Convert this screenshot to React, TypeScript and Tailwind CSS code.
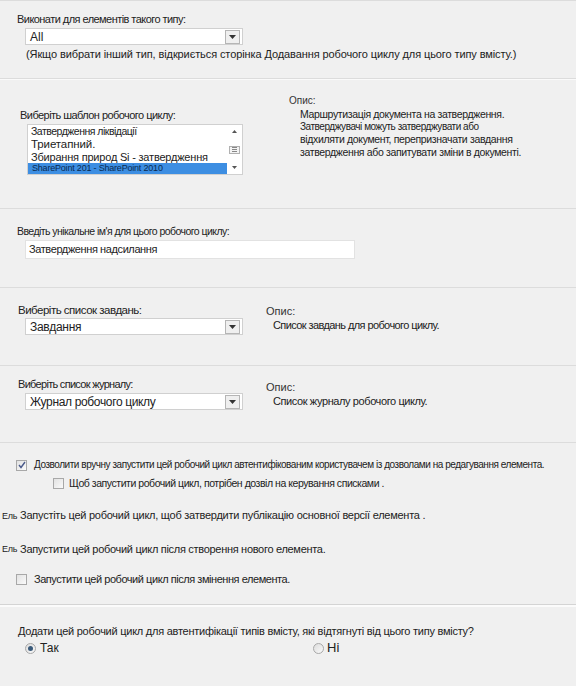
import React from "react";

const Arrow = () => (
  <div className="flex h-[14px] w-[15px] items-center justify-center border border-[#b5b5b5] bg-[#efefef]">
    <svg width="7" height="4" viewBox="0 0 7 4">
      <path d="M0 0 L7 0 L3.5 4 Z" fill="#333" />
    </svg>
  </div>
);

const Select = ({ value, cls }: { value: string; cls: string }) => (
  <div className="ml-[25px] flex h-[17px] w-[218px] items-center justify-between border border-[#d0d0d0] bg-white pl-[4px] pr-[2px]">
    <span className={cls}>{value}</span>
    <Arrow />
  </div>
);

const Checkbox = ({ checked }: { checked?: boolean }) => (
  <div className="flex h-[11px] w-[11px] shrink-0 items-center justify-center border border-[#a8a8a8] bg-gradient-to-br from-[#e2e2e2] to-[#fafafa]">
    {checked && (
      <svg width="8" height="8" viewBox="0 0 8 8">
        <path d="M1 4 L3 6.5 L7 1" stroke="#4a5a8a" strokeWidth="1.4" fill="none" />
      </svg>
    )}
  </div>
);

const Radio = ({ checked }: { checked?: boolean }) => (
  <div className="flex h-[11px] w-[11px] items-center justify-center rounded-full border border-[#a8a8a8] bg-gradient-to-br from-[#dcdcdc] to-[#fafafa]">
    {checked && <div className="h-[5px] w-[5px] rounded-full bg-[#3a5a7a]" />}
  </div>
);

export default function App() {
  return (
    <div
      className="flex h-[686px] w-[576px] flex-col overflow-hidden bg-[#f0f0f0] text-[#222]"
      style={{ fontFamily: '"Liberation Sans", Arial, sans-serif' }}
    >
      {/* Section 1 */}
      <section className="h-[78px] border-t border-[#dcdcdc] pt-[12px]">
        <div className="pl-[17px] text-[11px] leading-[13px] tracking-[-0.55px]">Виконати для елементів такого типу:</div>
        <div className="mt-[2px]">
          <Select value="All" cls="text-[12px] leading-[14px]" />
        </div>
        <div className="mt-[2px] pl-[26px] text-[11px] leading-[14px] tracking-[-0.1px]">
          (Якщо вибрати інший тип, відкриється сторінка Додавання робочого циклу для цього типу вмісту.)
        </div>
      </section>

      {/* Section 2 */}
      <section className="flex h-[130px] border-t border-[#dcdcdc] shadow-[inset_0_1px_0_#fafafa]">
        <div className="w-[270px] pt-[30px]">
          <div className="pl-[20px] text-[11px] leading-[13px] tracking-[-0.55px]">Виберіть шаблон робочого циклу:</div>
          <div className="ml-[27px] mt-[2px] flex h-[51px] w-[216px] overflow-hidden border border-[#d0d0d0] bg-white">
            <div className="flex min-w-0 flex-1 flex-col overflow-hidden whitespace-nowrap">
              <div className="h-[13px] pl-[3px] text-[10.5px] leading-[13px] tracking-[-0.5px]">Затвердження ліквідації</div>
              <div className="h-[13px] pl-[3px] text-[11.5px] leading-[13px] tracking-[-0.1px]">Триетапний.</div>
              <div className="h-[12px] pl-[3px] text-[11px] leading-[12px] tracking-[-0.2px]">Збирання природ Si - затвердження</div>
              <div className="h-[11px] bg-[#3d8ee2] pl-[4px] text-[9px] leading-[11px] tracking-[-0.2px] text-[#0a2a50]">SharePoint 201 - SharePoint 2010</div>
            </div>
            <div className="flex w-[15px] shrink-0 flex-col items-center justify-between py-[5px]">
              <svg width="5" height="3" viewBox="0 0 5 3"><path d="M0 3 L5 3 L2.5 0 Z" fill="#555" /></svg>
              <div className="flex h-[8px] w-[11px] flex-col items-center justify-center gap-[1px] border border-[#b0b0b0] bg-[#f4f4f4]">
                <div className="h-px w-[5px] bg-[#888]" />
                <div className="h-px w-[5px] bg-[#888]" />
                <div className="h-px w-[5px] bg-[#888]" />
              </div>
              <svg width="5" height="3" viewBox="0 0 5 3"><path d="M0 0 L5 0 L2.5 3 Z" fill="#555" /></svg>
            </div>
          </div>
        </div>
        <div className="flex-1 pt-[16px]">
          <div className="pl-[19px] text-[10px] leading-[12px] text-[#333]">Опис:</div>
          <div className="pl-[30px] pt-[1px] text-[10.5px] leading-[12.5px] tracking-[-0.35px]">
            <div>Маршрутизація документа на затвердження.</div>
            <div className="text-[10px] tracking-[-0.45px]">Затверджувачі можуть затверджувати або</div>
            <div>відхиляти документ, перепризначати завдання</div>
            <div>затвердження або запитувати зміни в документі.</div>
          </div>
        </div>
      </section>

      {/* Section 3 */}
      <section className="h-[79px] border-t border-[#dcdcdc] pt-[16px]">
        <div className="pl-[17px] text-[10.5px] leading-[13px] tracking-[-0.55px]">Введіть унікальне ім'я для цього робочого циклу:</div>
        <div className="ml-[25px] mt-[2px] flex h-[19px] w-[330px] items-center border border-[#e2e2e2] bg-white pl-[3px] text-[11px] tracking-[-0.4px]">
          Затвердження надсилання
        </div>
      </section>

      {/* Section 4 */}
      <section className="flex h-[78px] border-t border-[#dcdcdc] pt-[15px]">
        <div className="w-[248px]">
          <div className="pl-[18px] text-[11.5px] leading-[14px] tracking-[-0.5px]">Виберіть список завдань:</div>
          <div className="mt-[1px]">
            <Select value="Завдання" cls="text-[12px] leading-[14px] tracking-[-0.3px]" />
          </div>
        </div>
        <div className="pt-[2px]">
          <div className="pl-[18px] text-[11px] leading-[13px] text-[#333]">Опис:</div>
          <div className="pl-[25px] text-[11px] leading-[14px] tracking-[-0.6px]">Список завдань для робочого циклу.</div>
        </div>
      </section>

      {/* Section 5 */}
      <section className="flex h-[77px] border-t border-[#dcdcdc] pt-[12px]">
        <div className="w-[248px]">
          <div className="pl-[18px] text-[11px] leading-[13px] tracking-[-0.7px]">Виберіть список журналу:</div>
          <div className="mt-[2px]">
            <Select value="Журнал робочого циклу" cls="text-[12px] leading-[14px] tracking-[-0.35px]" />
          </div>
        </div>
        <div className="pt-[3px]">
          <div className="pl-[18px] text-[11px] leading-[13px] text-[#333]">Опис:</div>
          <div className="pl-[25px] text-[11px] leading-[14px] tracking-[-0.4px]">Список журналу робочого циклу.</div>
        </div>
      </section>

      {/* Section 6 */}
      <section className="h-[162px] border-t border-[#dcdcdc] pt-[16px]">
        <div className="flex items-center pl-[16px]">
          <Checkbox checked />
          <span className="ml-[7px] whitespace-nowrap text-[10px] leading-[12px] tracking-[-0.45px]">
            Дозволити вручну запустити цей робочий цикл автентифікованим користувачем із дозволами на редагування елемента.
          </span>
        </div>
        <div className="mt-[6px] flex items-center pl-[53px]">
          <Checkbox />
          <span className="ml-[5px] text-[10.5px] leading-[13px] tracking-[-0.45px]">
            Щоб запустити робочий цикл, потрібен дозвіл на керування списками .
          </span>
        </div>
        <div className="mt-[19px] flex items-center pl-[2px]">
          <span className="text-[9px] leading-[10px] tracking-[-0.3px]">Ель</span>
          <span className="ml-[3px] text-[11px] leading-[13px] tracking-[-0.25px]">
            Запустіть цей робочий цикл, щоб затвердити публікацію основної версії елемента .
          </span>
        </div>
        <div className="mt-[20px] flex items-center pl-[2px]">
          <span className="text-[9px] leading-[10px] tracking-[-0.3px]">Ель</span>
          <span className="ml-[3px] text-[11px] leading-[14px] tracking-[-0.3px]">
            Запустити цей робочий цикл після створення нового елемента.
          </span>
        </div>
        <div className="mt-[17px] flex items-center pl-[16px]">
          <Checkbox />
          <span className="ml-[7px] text-[11px] leading-[13px] tracking-[-0.45px]">
            Запустити цей робочий цикл після змінення елемента.
          </span>
        </div>
      </section>

      {/* Section 7 */}
      <section className="h-[82px] border-t border-[#d4d4d4] pt-[20px] shadow-[inset_0_2px_0_#fbfbfb]">
        <div className="pl-[18px] text-[11px] leading-[13px] tracking-[-0.25px]">
          Додати цей робочий цикл для автентифікації типів вмісту, які відтягнуті від цього типу вмісту?
        </div>
        <div className="mt-[3px] flex items-center">
          <div className="flex w-[313px] items-center pl-[25px]">
            <Radio checked />
            <span className="ml-[4px] text-[12px] leading-[14px]">Так</span>
          </div>
          <div className="flex items-center">
            <Radio />
            <span className="ml-[3px] text-[13px] leading-[14px]">Ні</span>
          </div>
        </div>
      </section>
    </div>
  );
}
